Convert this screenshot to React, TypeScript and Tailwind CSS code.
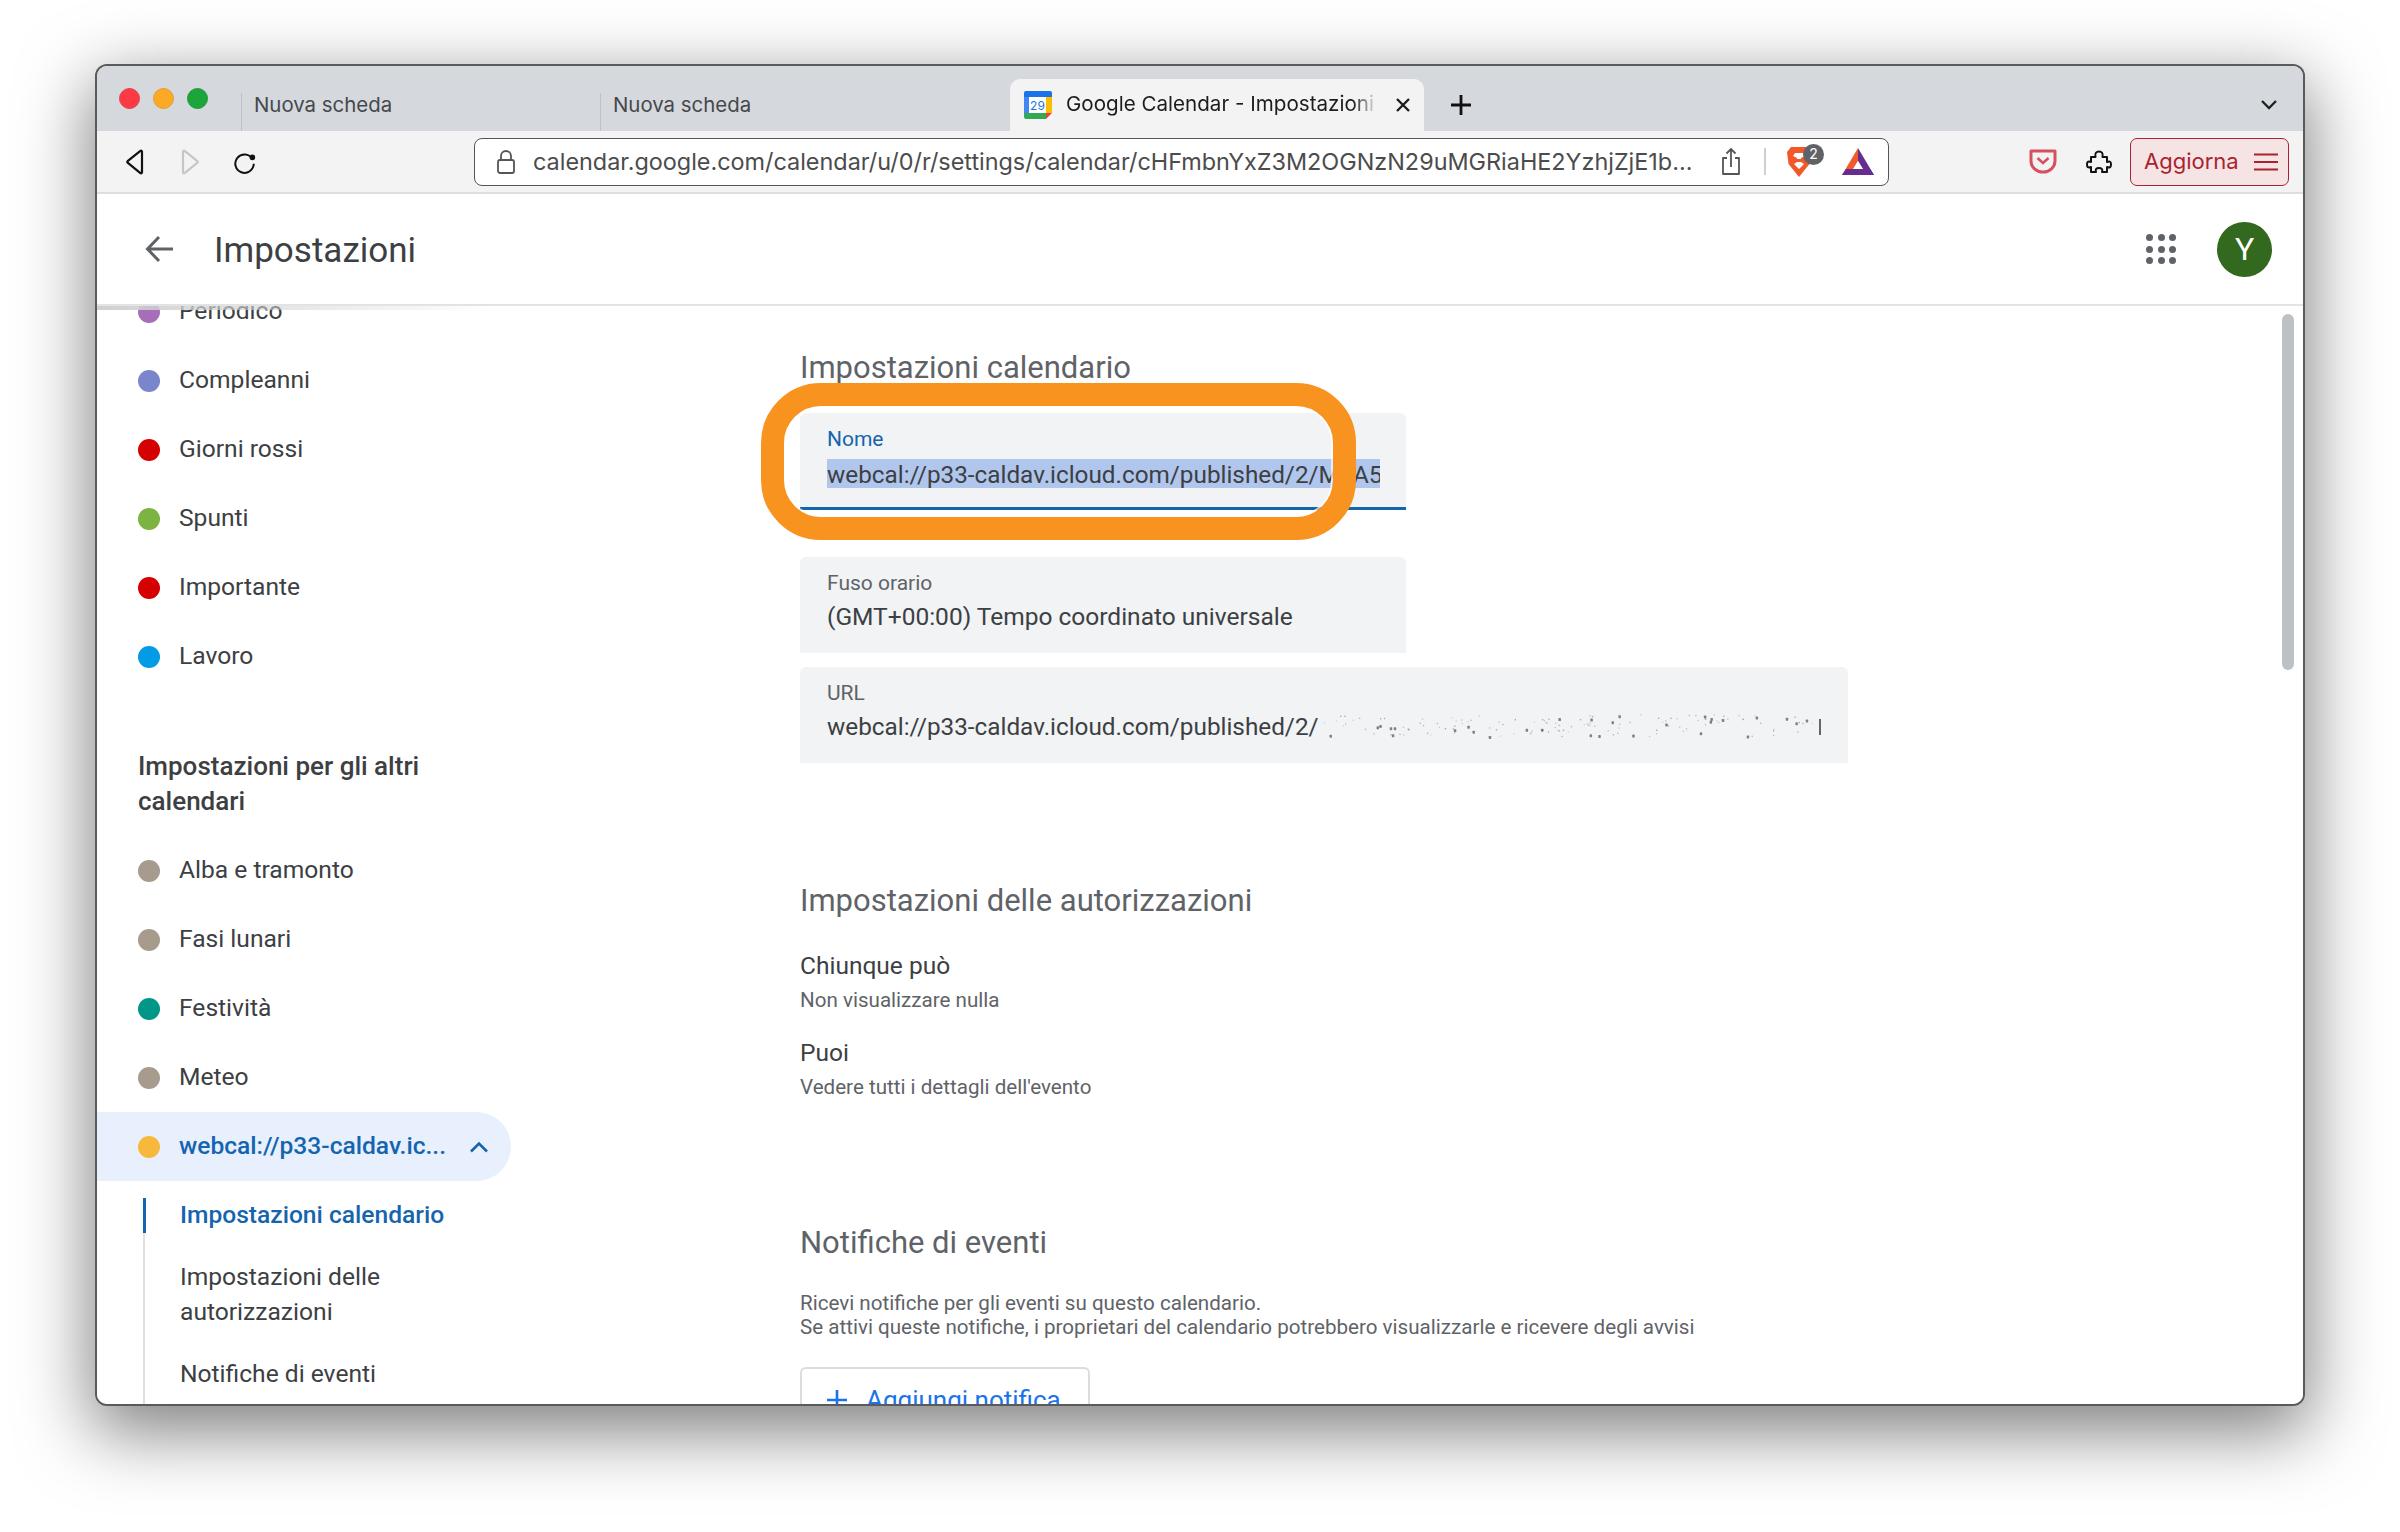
import React from "react";

const roboto = "font-['Roboto',sans-serif]";
const inter = "font-['Inter','Liberation_Sans',sans-serif]";

function Row({ color, label }: { color: string; label: string }) {
  return (
    <div className="flex h-[69px] items-center pl-[41px]">
      <svg width="22" height="22" className="shrink-0"><circle cx="11" cy="11" r="11" fill={color} /></svg>
      <span className="ml-[19px] text-[24.6px] text-[#3c4043]">{label}</span>
    </div>
  );
}

function CalIcon() {
  return (
    <svg width="28" height="28" viewBox="0 0 28 28" className="shrink-0">
      <rect width="28" height="28" rx="2" fill="#fff" />
      <path d="M0 6V2a2 2 0 0 1 2-2h24a2 2 0 0 1 2 2v4z" fill="#1a73e8" />
      <path d="M0 6h5v16H0z" fill="#4285f4" />
      <path d="M22 6h6v16h-6z" fill="#fbbc04" />
      <path d="M0 22h22v6H2a2 2 0 0 1-2-2z" fill="#34a853" />
      <path d="M22 22h6l-6 6z" fill="#ea4335" />
      <text x="13.500" y="19" textAnchor="middle" fontSize="12" fontFamily="Inter" fill="#1a73e8">29</text>
    </svg>
  );
}

const frac = (n: number) => n - Math.floor(n);

function Specks() {
  const dots = Array.from({ length: 150 }).map((_, i) => {
    const a = frac(Math.sin(i * 12.9898 + 1) * 43758.5453) * 495;
    const b = frac(Math.sin(i * 78.233 + 2) * 24634.6345) * 22;
    const big = i % 5 === 0;
    return {
      x: a,
      y: b,
      w: big ? 2.500 : 1.500,
      h: big ? 3 : 1.500,
      o: big ? 0.65 : 0.15 + frac(Math.sin(i * 3.7) * 917.3) * 0.3,
    };
  });
  return (
    <svg width="502" height="26" viewBox="0 0 502 26" className="ml-[1px] shrink-0 self-center">
      {dots.map((d, i) => (
        <rect key={i} x={d.x} y={d.y} width={d.w} height={d.h} rx="0.7" fill="#444" opacity={d.o} />
      ))}
      <rect x="499" y="5" width="2" height="16" fill="#666" />
    </svg>
  );
}

export default function App() {
  return (
    <div className={`h-[1532px] w-[2400px] overflow-hidden bg-white pl-[95px] pt-[64px] ${roboto}`}>
      <div className="relative flex h-[1342px] w-[2210px] flex-col overflow-hidden rounded-[12px] border-2 border-[#5a5a5a] bg-white shadow-[0_22px_70px_4px_rgba(0,0,0,0.5)]">
        {/* Tab strip */}
        <div className={`flex h-[65px] shrink-0 items-end bg-[#d5d8dc] ${inter}`}>
          <div className="flex h-full w-[144px] shrink-0 items-center pl-[22px]">
            <div className="flex gap-[13px]">
              <span className="h-[21px] w-[21px] rounded-full border border-[#e2414b] bg-[#fc3a44]" />
              <span className="h-[21px] w-[21px] rounded-full border border-[#dfa02f] bg-[#fcaa24]" />
              <span className="h-[21px] w-[21px] rounded-full border border-[#1f9a39] bg-[#1ba53a]" />
            </div>
          </div>
          <div className="flex h-[38px] w-[359px] shrink-0 items-center border-l border-[#bfc2c6] pb-[14px] pl-[12px] text-[20.4px] text-[#45484c]">Nuova scheda</div>
          <div className="flex h-[38px] w-[410px] shrink-0 items-center border-l border-[#bfc2c6] pb-[14px] pl-[12px] text-[20.4px] text-[#45484c]">Nuova scheda</div>
          <div className="flex h-[52px] w-[414px] shrink-0 items-center rounded-t-[10px] bg-[#f3f3f4] pb-[1px] pl-[14px] text-[20.6px] text-[#1d1d1f]">
            <CalIcon />
            <span className="ml-[14px] w-[312px] overflow-hidden whitespace-nowrap [mask-image:linear-gradient(to_right,black_92%,transparent_100%)]">Google Calendar - Impostazioni</span>
            <svg width="16" height="16" viewBox="0 0 16 16" className="ml-[17px]"><path d="M2 2l12 12M14 2L2 14" stroke="#1d1d1f" strokeWidth="2.400" /></svg>
          </div>
          <div className="flex h-[52px] items-center pl-[26px]">
            <svg width="22" height="22" viewBox="0 0 22 22"><path d="M11 1v20M1 11h20" stroke="#111" strokeWidth="2.800" /></svg>
          </div>
          <div className="ml-auto flex h-[52px] items-center pr-[25px]">
            <svg width="18" height="12" viewBox="0 0 18 12"><path d="M2 2l7 7 7-7" fill="none" stroke="#222" strokeWidth="2.400" /></svg>
          </div>
        </div>
        {/* Toolbar */}
        <div className="flex h-[63px] shrink-0 items-center border-b-[2px] border-[#dedede] bg-[#f3f3f4] pl-[28px] pr-[14px]">
          <svg width="20" height="26" viewBox="0 0 20 26" className="shrink-0"><path d="M17 2.500v21a1 1 0 0 1-1.600.7L2.600 13.700a1 1 0 0 1 0-1.500L15.400 1.800a1 1 0 0 1 1.600.7z" fill="none" stroke="#111" strokeWidth="2.200" strokeLinejoin="round" /></svg>
          <svg width="20" height="26" viewBox="0 0 20 26" className="ml-[35px] shrink-0"><path d="M3 2.500v21a1 1 0 0 0 1.600.7l12.800-10.500a1 1 0 0 0 0-1.500L4.600 1.800A1 1 0 0 0 3 2.500z" fill="none" stroke="#c4c6c9" strokeWidth="2.200" strokeLinejoin="round" /></svg>
          <svg width="24" height="24" viewBox="0 0 26 26" className="ml-[33px] shrink-0"><path d="M21 9.500A10 10 0 1 0 22.500 15" fill="none" stroke="#111" strokeWidth="2.200" /><circle cx="21" cy="8" r="3" fill="#111" /></svg>
          <div className={`ml-[217px] flex h-[48px] w-[1415px] shrink-0 items-center rounded-[8px] border-[1.5px] border-[#555] bg-white pl-[21px] ${inter}`}>
            <svg width="20" height="26" viewBox="0 0 20 26" className="shrink-0"><path d="M5 11V7a5 5 0 0 1 10 0v4" fill="none" stroke="#555" strokeWidth="1.800" /><rect x="2" y="11" width="16" height="13" rx="2" fill="none" stroke="#555" strokeWidth="1.800" /></svg>
            <span className="ml-[17px] w-[1166px] shrink-0 whitespace-nowrap text-[23.4px] text-[#4c4c4c]">calendar.google.com/calendar/u/0/r/settings/calendar/cHFmbnYxZ3M2OGNzN29uMGRiaHE2YzhjZjE1b...</span>
            <svg width="22" height="30" viewBox="0 0 22 30" className="ml-[21px] shrink-0"><path d="M7 11H3v16h16V11h-4" fill="none" stroke="#555" strokeWidth="1.800" strokeLinejoin="round" /><path d="M11 20V2M6.500 6.500L11 2l4.500 4.500" fill="none" stroke="#555" strokeWidth="1.800" /></svg>
            <span className="ml-[22px] h-[27px] w-[2px] shrink-0 bg-[#cfcfcf]" />
            <div className="relative ml-[20px] h-[32px] w-[26px] shrink-0">
              <svg width="26" height="32" viewBox="0 0 26 32"><path d="M5 1h16l4 5-1.500 12L13 31 2.500 18 1 6z" fill="#f1592a" /><path d="M7 10l4 2v4l-3 2 5 5 5-5-3-2v-4l4-2-2-3H9z" fill="#fff" /><path d="M11 13h4v3h-4z" fill="#f1592a" /></svg>
              <span className="absolute -right-[12px] -top-[2px] flex h-[21px] w-[21px] items-center justify-center rounded-full bg-[#5f6368] text-[14px] leading-none text-white">2</span>
            </div>
            <svg width="32" height="27" viewBox="0 0 32 27" className="ml-[30px] shrink-0"><path d="M16 0L0 27h8l8-14z" fill="#f25a2b" /><path d="M16 0l16 27h-8l-8-14z" fill="#662d91" /><path d="M0 27h32l-4-6H4z" fill="#662d91" /><path d="M16 13l-5 8h10z" fill="#fff" /></svg>
          </div>
          <svg width="28" height="25" viewBox="0 0 28 25" className="ml-[140px] shrink-0"><path d="M2 2h24v10a12 11 0 0 1-24 0z" fill="none" stroke="#d8505f" strokeWidth="3" strokeLinejoin="round" /><path d="M8.500 9l5.500 5 5.500-5" fill="none" stroke="#d8505f" strokeWidth="2.600" /></svg>
          <svg width="26" height="24" viewBox="0 0 26 24" className="ml-[29px] shrink-0"><path d="M5 7h4.500c-1-4 1-5.500 3.500-5.500S17.500 3 16.500 7H21v5c3-1 4-.5 4 2.500s-1.500 3.500-4 2.500v5h-5c1-3-.5-4-3-4s-4 1-3 4H5v-5c-3 1-4 0-4-2.500S2 11 5 12z" fill="none" stroke="#111" strokeWidth="2" strokeLinejoin="round" /></svg>
          <div className={`ml-[18px] flex h-[48px] w-[159px] shrink-0 items-center rounded-[7px] border-[1.5px] border-[#a8232e] bg-[#f6e4e4] pl-[13px] text-[22px] text-[#a8232e] ${inter}`}>
            Aggiorna
            <svg width="24" height="20" viewBox="0 0 24 20" className="ml-[15px]"><path d="M0 2.500h24M0 10h24M0 17.500h24" stroke="#a8232e" strokeWidth="2.200" /></svg>
          </div>
        </div>
        {/* App header */}
        <div className="flex h-[112px] shrink-0 items-center border-b-[2px] border-[#e2e3e5] bg-white pl-[48px] pr-[31px]">
          <svg width="30" height="28" viewBox="0 0 30 28"><path d="M28 14H3M14 2L2.500 14 14 26" fill="none" stroke="#5f6368" strokeWidth="3" /></svg>
          <span className="ml-[39px] translate-y-[1px] text-[35px] leading-none text-[#3c4043]">Impostazioni</span>
          <div className="ml-auto grid grid-cols-3 gap-[4.500px]">
            {Array.from({ length: 9 }).map((_, i) => (
              <span key={i} className="h-[7px] w-[7px] rounded-full bg-[#5f6368]" />
            ))}
          </div>
          <div className="ml-[41px] flex h-[55px] w-[55px] items-center justify-center rounded-full bg-[#33691e] text-[32px] text-white">Y</div>
        </div>
        {/* Body */}
        <div className="relative flex min-h-0 flex-1 overflow-hidden bg-white">
          <div className="absolute left-0 top-0 h-[4px] w-[400px] bg-gradient-to-r from-[#d0d0d0] to-transparent" />
          <div className="w-[703px] shrink-0 -mt-[29px]">
            <Row color="#a56eb8" label="Periodico" />
            <Row color="#7986cb" label="Compleanni" />
            <Row color="#d50000" label="Giorni rossi" />
            <Row color="#7cb342" label="Spunti" />
            <Row color="#d50000" label="Importante" />
            <Row color="#039be5" label="Lavoro" />
            <div className="mt-[58px] w-[360px] pl-[41px] text-[26px] font-medium leading-[35px] text-[#3c4043]">Impostazioni per gli altri calendari</div>
            <div className="mt-[17px]" />
            <Row color="#a79b8e" label="Alba e tramonto" />
            <Row color="#a79b8e" label="Fasi lunari" />
            <Row color="#009688" label="Festività" />
            <Row color="#a79b8e" label="Meteo" />
            <div className="flex h-[69px] w-[414px] items-center rounded-r-[35px] bg-[#e8f0fe] pl-[41px] pr-[22px]">
              <svg width="22" height="22" className="shrink-0"><circle cx="11" cy="11" r="11" fill="#f6b93b" /></svg>
              <span className="ml-[19px] text-[24.6px] font-medium text-[#1565ae]">webcal://p33-caldav.ic...</span>
              <svg width="20" height="12" viewBox="0 0 20 12" className="ml-auto"><path d="M2 10.500l8-8 8 8" fill="none" stroke="#1565ae" strokeWidth="2.600" /></svg>
            </div>
            <div className="ml-[46px] mt-[17px] border-l-[2px] border-[#e0e0e0] pb-[60px]">
              <div className="-ml-[2px] flex h-[35px] items-center border-l-[3px] border-[#1565ae] pl-[34px] text-[24.6px] font-medium text-[#1565ae]">Impostazioni calendario</div>
              <div className="mt-[26px] w-[280px] pl-[35px] text-[24.6px] leading-[35px] text-[#3c4043]">Impostazioni delle autorizzazioni</div>
              <div className="mt-[27px] pl-[35px] text-[24.6px] leading-[35px] text-[#3c4043]">Notifiche di eventi</div>
            </div>
          </div>
          <div className="relative min-w-0 flex-1 pt-[42px]">
            <h2 className="text-[31px] leading-[40px] text-[#5f6368]">Impostazioni calendario</h2>
            <div className="mt-[25px] h-[97px] w-[606px] rounded-t-[6px] border-b-[3px] border-[#1565ae] bg-[#f1f3f4] pl-[27px] pr-[26px] pt-[14px]">
              <div className="text-[21px] leading-[24px] text-[#1565ae]">Nome</div>
              <div className="mt-[8px] h-[29px] overflow-hidden whitespace-nowrap bg-[#b0c6ec] text-[24.3px] leading-[31px] text-[#3c4043]">webcal://p33-caldav.icloud.com/published/2/MTA5NjQyMjYzMzMw</div>
            </div>
            <div className="mt-[47px] h-[96px] w-[606px] rounded-t-[6px] bg-[#f1f3f4] pl-[27px] pt-[14px]">
              <div className="text-[21px] leading-[24px] text-[#5f6368]">Fuso orario</div>
              <div className="mt-[6px] text-[24.5px] leading-[32px] text-[#3c4043]">(GMT+00:00) Tempo coordinato universale</div>
            </div>
            <div className="mt-[14px] h-[96px] w-[1048px] rounded-t-[6px] bg-[#f1f3f4] pl-[27px] pt-[14px]">
              <div className="text-[21px] leading-[24px] text-[#5f6368]">URL</div>
              <div className="mt-[6px] flex whitespace-nowrap text-[24.3px] leading-[32px] text-[#3c4043]">
                webcal://p33-caldav.icloud.com/published/2/
                <Specks />
              </div>
            </div>
            <h2 className="mt-[118px] text-[31px] leading-[40px] text-[#5f6368]">Impostazioni delle autorizzazioni</h2>
            <div className="mt-[27px] text-[24.5px] leading-[36px] text-[#3c4043]">Chiunque può</div>
            <div className="mt-[1px] text-[20.6px] leading-[30px] text-[#5f6368]">Non visualizzare nulla</div>
            <div className="mt-[20px] text-[24.5px] leading-[36px] text-[#3c4043]">Puoi</div>
            <div className="mt-[1px] text-[20.6px] leading-[30px] text-[#5f6368]">Vedere tutti i dettagli dell'evento</div>
            <h2 className="mt-[121px] text-[31px] leading-[40px] text-[#5f6368]">Notifiche di eventi</h2>
            <div className="mt-[28px] text-[20.6px] leading-[24px] text-[#5f6368]">Ricevi notifiche per gli eventi su questo calendario.</div>
            <div className="text-[20.6px] leading-[24px] text-[#5f6368]">Se attivi queste notifiche, i proprietari del calendario potrebbero visualizzarle e ricevere degli avvisi</div>
            <div className="mt-[28px] flex h-[60px] w-[290px] items-start rounded-[6px] border-[2px] border-[#dadce0] pl-[24px] pt-[12px] text-[26px] text-[#1a73e8]">
              <svg width="22" height="22" viewBox="0 0 22 22" className="mt-[8px]"><path d="M11 1v20M1 11h20" stroke="#1a73e8" strokeWidth="2.600" /></svg>
              <span className="ml-[18px]">Aggiungi notifica</span>
            </div>
            {/* Orange annotation */}
            <div className="absolute left-[-39px] top-[77px] h-[157px] w-[595px] rounded-[60px] border-[23px] border-[#f7931e] shadow-[inset_0_0_0_2px_rgba(255,255,255,0.7)]" />
          </div>
          {/* Scrollbar */}
          <div className="absolute right-[9px] top-[8px] h-[356px] w-[12px] rounded-full bg-[#bdc1c6]" />
        </div>
      </div>
    </div>
  );
}
